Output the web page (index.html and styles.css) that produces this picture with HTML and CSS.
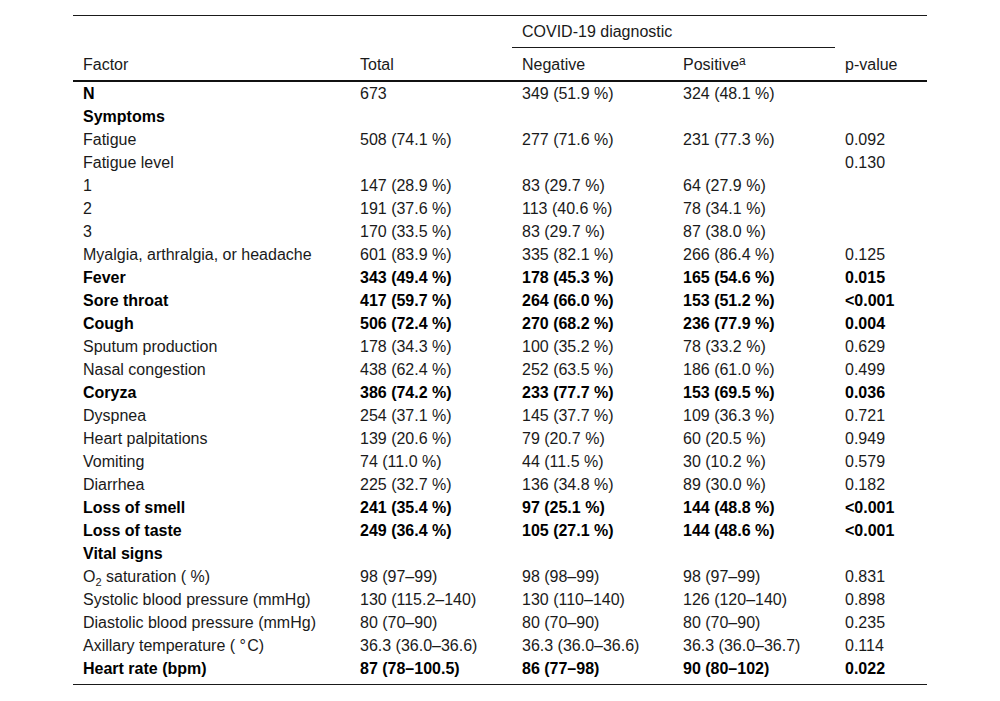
FILE: index.html
```html
<!DOCTYPE html>
<html lang="en">
<head>
<meta charset="utf-8">
<title>COVID-19 diagnostic table</title>
<link rel="stylesheet" href="styles.css">
</head>
<body>
<div class="page">
<table class="data">
  <colgroup>
    <col class="c-factor"><col class="c-total"><col class="c-neg"><col class="c-pos"><col class="c-p">
  </colgroup>
  <thead>
    <tr>
      <th rowspan="2" class="span">Factor</th>
      <th rowspan="2" class="span">Total</th>
      <th colspan="2" class="group">COVID-19 diagnostic</th>
      <th rowspan="2" class="span">p-value</th>
    </tr>
    <tr>
      <th class="sub">Negative</th>
      <th class="sub">Positive<sup>a</sup></th>
    </tr>
  </thead>
  <tbody>
    <tr><td class="sect">N</td><td>673</td><td>349 (51.9 %)</td><td>324 (48.1 %)</td><td></td></tr>
    <tr><td class="sect">Symptoms</td><td></td><td></td><td></td><td></td></tr>
    <tr><td>Fatigue</td><td>508 (74.1 %)</td><td>277 (71.6 %)</td><td>231 (77.3 %)</td><td>0.092</td></tr>
    <tr><td>Fatigue level</td><td></td><td></td><td></td><td>0.130</td></tr>
    <tr><td>1</td><td>147 (28.9 %)</td><td>83 (29.7 %)</td><td>64 (27.9 %)</td><td></td></tr>
    <tr><td>2</td><td>191 (37.6 %)</td><td>113 (40.6 %)</td><td>78 (34.1 %)</td><td></td></tr>
    <tr><td>3</td><td>170 (33.5 %)</td><td>83 (29.7 %)</td><td>87 (38.0 %)</td><td></td></tr>
    <tr><td>Myalgia, arthralgia, or headache</td><td>601 (83.9 %)</td><td>335 (82.1 %)</td><td>266 (86.4 %)</td><td>0.125</td></tr>
    <tr class="b"><td>Fever</td><td>343 (49.4 %)</td><td>178 (45.3 %)</td><td>165 (54.6 %)</td><td>0.015</td></tr>
    <tr class="b"><td>Sore throat</td><td>417 (59.7 %)</td><td>264 (66.0 %)</td><td>153 (51.2 %)</td><td>&lt;0.001</td></tr>
    <tr class="b"><td>Cough</td><td>506 (72.4 %)</td><td>270 (68.2 %)</td><td>236 (77.9 %)</td><td>0.004</td></tr>
    <tr><td>Sputum production</td><td>178 (34.3 %)</td><td>100 (35.2 %)</td><td>78 (33.2 %)</td><td>0.629</td></tr>
    <tr><td>Nasal congestion</td><td>438 (62.4 %)</td><td>252 (63.5 %)</td><td>186 (61.0 %)</td><td>0.499</td></tr>
    <tr class="b"><td>Coryza</td><td>386 (74.2 %)</td><td>233 (77.7 %)</td><td>153 (69.5 %)</td><td>0.036</td></tr>
    <tr><td>Dyspnea</td><td>254 (37.1 %)</td><td>145 (37.7 %)</td><td>109 (36.3 %)</td><td>0.721</td></tr>
    <tr><td>Heart palpitations</td><td>139 (20.6 %)</td><td>79 (20.7 %)</td><td>60 (20.5 %)</td><td>0.949</td></tr>
    <tr><td>Vomiting</td><td>74 (11.0 %)</td><td>44 (11.5 %)</td><td>30 (10.2 %)</td><td>0.579</td></tr>
    <tr><td>Diarrhea</td><td>225 (32.7 %)</td><td>136 (34.8 %)</td><td>89 (30.0 %)</td><td>0.182</td></tr>
    <tr class="b"><td>Loss of smell</td><td>241 (35.4 %)</td><td>97 (25.1 %)</td><td>144 (48.8 %)</td><td>&lt;0.001</td></tr>
    <tr class="b"><td>Loss of taste</td><td>249 (36.4 %)</td><td>105 (27.1 %)</td><td>144 (48.6 %)</td><td>&lt;0.001</td></tr>
    <tr><td class="sect">Vital signs</td><td></td><td></td><td></td><td></td></tr>
    <tr><td>O<sub>2</sub> saturation ( %)</td><td>98 (97–99)</td><td>98 (98–99)</td><td>98 (97–99)</td><td>0.831</td></tr>
    <tr><td>Systolic blood pressure (mmHg)</td><td>130 (115.2–140)</td><td>130 (110–140)</td><td>126 (120–140)</td><td>0.898</td></tr>
    <tr><td>Diastolic blood pressure (mmHg)</td><td>80 (70–90)</td><td>80 (70–90)</td><td>80 (70–90)</td><td>0.235</td></tr>
    <tr><td>Axillary temperature ( °&#8202;C)</td><td>36.3 (36.0–36.6)</td><td>36.3 (36.0–36.6)</td><td>36.3 (36.0–36.7)</td><td>0.114</td></tr>
    <tr class="b last"><td>Heart rate (bpm)</td><td>87 (78–100.5)</td><td>86 (77–98)</td><td>90 (80–102)</td><td>0.022</td></tr>
  </tbody>
</table>
</div>
</body>
</html>
```

FILE: styles.css
```css
html, body {
  margin: 0;
  padding: 0;
  background: #ffffff;
}

body {
  font-family: "Liberation Sans", Arial, Helvetica, sans-serif;
  font-size: 16px;
  color: #1a1a1a;
}

.page {
  padding: 15px 0 0 73px;
}

.data {
  border-collapse: separate;
  border-spacing: 0;
  width: 854px;
  table-layout: fixed;
  border-top: 1px solid #1a1a1a;
  border-bottom: 1px solid #1a1a1a;
}

.c-factor { width: 277px; }
.c-total { width: 162px; }
.c-neg { width: 161px; }
.c-pos { width: 162px; }
.c-p { width: 92px; }

.data th,
.data td {
  text-align: left;
  font-weight: normal;
  line-height: 23px;
  padding: 0 10px;
  white-space: nowrap;
}

.data th.group {
  padding-top: 4px;
  padding-bottom: 4px;
  border-bottom: 1px solid #1a1a1a;
  vertical-align: middle;
}

.data th.sub {
  padding-top: 4.5px;
  padding-bottom: 4.5px;
  border-bottom: 2px solid #111;
  vertical-align: bottom;
}

.data th.span {
  vertical-align: bottom;
  padding-bottom: 4.5px;
  border-bottom: 2px solid #111;
}

.data sup {
  font-size: 12px;
  line-height: 0;
  vertical-align: 5px;
}

.data sub {
  font-size: 11px;
  line-height: 0;
  vertical-align: -4px;
}

.data tr.b td,
.data td.sect {
  font-weight: bold;
  color: #000;
}

.data tr.last td {
  padding-bottom: 4px;
}
```
